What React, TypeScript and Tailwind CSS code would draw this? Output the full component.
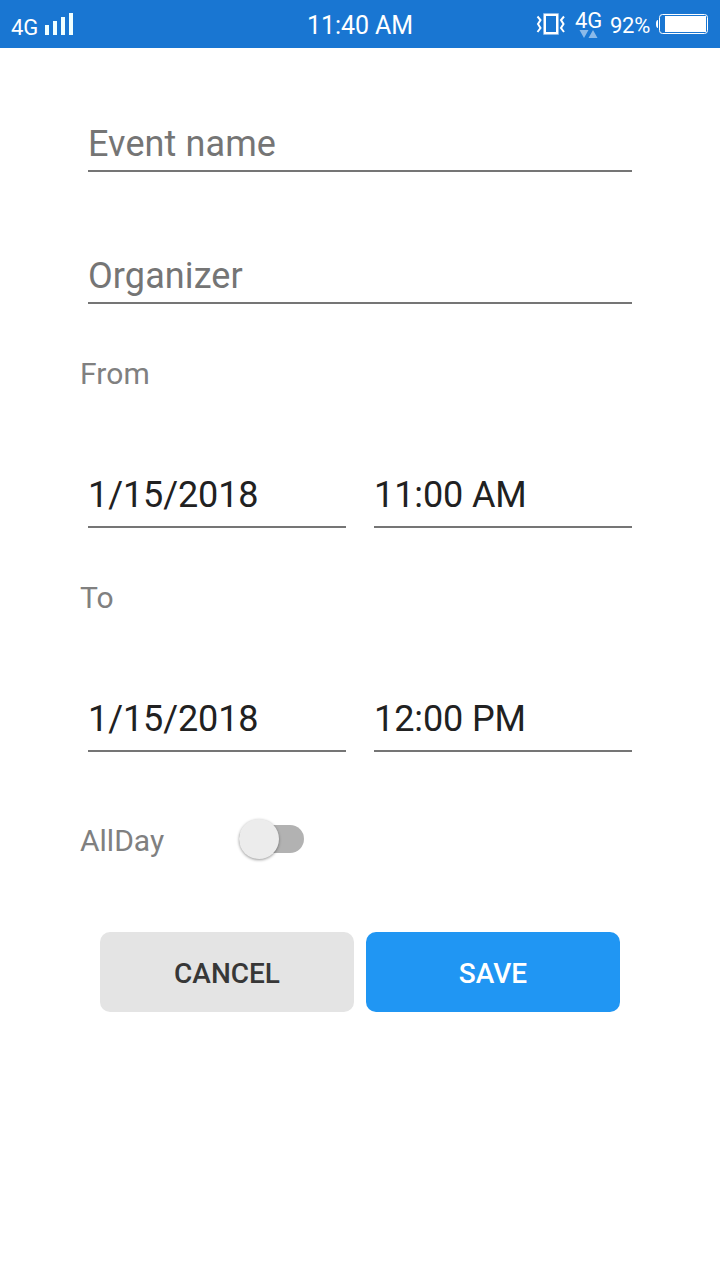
import React from "react";

function Field({ text, hint = false, className = "" }: { text: string; hint?: boolean; className?: string }) {
  return (
    <div className={`border-b-2 border-[#757575] text-[36px] leading-[42px] whitespace-nowrap ${hint ? "text-[#757575] tracking-[0.1px]" : "text-[#212121] tracking-[-0.1px]"} ${className}`}>
      {text}
    </div>
  );
}

function StatusBar() {
  return (
    <header className="flex h-12 items-center bg-[#1976d2] text-white">
      <div className="flex w-[300px] items-center pl-[11px]">
        <span className="w-[34px] pt-[7px] text-[22px] leading-6">4G</span>
        <svg width="29" height="22" viewBox="0 0 29 22" fill="#f0ffff">
          <path d="M0 12h4v10H0zM8 8h4v14H8zM16 4h4v18h-4zM24 0h4v22h-4z" />
        </svg>
      </div>
      <div className="w-[120px] pt-[3px] text-center text-[25px] leading-7 tracking-[-0.1px] whitespace-nowrap">11:40 AM</div>
      <div className="flex w-[300px] items-center pl-[116px]">
        <svg width="29" height="24" viewBox="0 0 29 24" fill="none" stroke="currentColor">
          <path d="M7.500 1.500h15v21h-15z" stroke="#8cbae9" />
          <path d="M9 3h12v18H9z" strokeWidth="2" />
          <path d="M1.500 4.500L4.500 8L2 12L4.500 16L1.500 20M28 4.500L25 8L27.500 12L25 16L28 20" strokeWidth="2" />
        </svg>
        <div className="ml-[10px] flex w-[35px] flex-col py-px">
          <span className="h-5 text-[22px] leading-[21px]">4G</span>
          <svg width="27" height="8" viewBox="0 0 27 8" fill="#8cbae9"><path d="M4.500 0h9L9 8zM13.500 8h9L18 0z" /></svg>
        </div>
        <span className="w-[46px] pt-[3px] text-[22px] leading-6 tracking-[-0.3px]">92%</span>
        <svg width="52" height="20" viewBox="0 0 52 20">
          <rect x="3.500" y=".5" width="48" height="19" rx="3" fill="none" stroke="white" />
          <path d="M9 2h41v16H9zM2 6v8Q0 14 0 10T2 6z" fill="white" />
        </svg>
      </div>
    </header>
  );
}

export default function App() {
  return (
    <main className="h-[1280px] w-[720px] overflow-hidden bg-white font-[Roboto,sans-serif]">
      <StatusBar />
      <form className="px-20 pt-[75px]">
        <Field text="Event name" hint className="mx-2 h-[49px]" />
        <Field text="Organizer" hint className="mx-2 mt-[83px] h-[49px]" />
        <div className="mt-[52px] text-[30px] leading-9 tracking-[0.1px] text-[#808080]">From</div>
        <div className="mx-2 mt-[82px] flex gap-7">
          <Field text="1/15/2018" className="h-[54px] w-[258px]" />
          <Field text="11:00 AM" className="h-[54px] w-[258px]" />
        </div>
        <div className="mt-[52px] text-[30px] leading-9 tracking-[0.1px] text-[#808080]">To</div>
        <div className="mx-2 mt-[82px] flex gap-7">
          <Field text="1/15/2018" className="h-[54px] w-[258px]" />
          <Field text="12:00 PM" className="h-[54px] w-[258px]" />
        </div>
        <div className="mt-[63px] flex h-[48px] items-center">
          <span className="w-[159px] pt-[4px] text-[30px] leading-9 text-[#808080]">AllDay</span>
          <div className="flex h-7 w-[65px] items-center rounded-full bg-[#b2b2b2]">
            <div className="h-10 w-10 rounded-full bg-[#ececec] shadow-[0_1px_3px_#0006]" />
          </div>
        </div>
        <div className="mx-5 mt-[69px] flex gap-3 text-[28px] font-medium">
          <button type="button" className="h-20 w-[254px] rounded-[10px] bg-[#e4e4e4] pt-[3px] text-[#373737]">CANCEL</button>
          <button type="button" className="h-20 w-[254px] rounded-[10px] bg-[#2096f3] pt-[3px] text-white">SAVE</button>
        </div>
      </form>
    </main>
  );
}
